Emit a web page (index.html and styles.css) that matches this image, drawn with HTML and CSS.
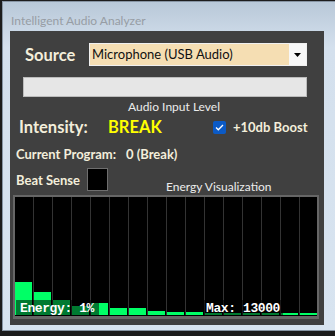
FILE: index.html
```html
<!DOCTYPE html>
<html>
  <head>
    <meta charset="UTF-8">
    <title>Intelligent Audio Analyzer</title>
    <link rel="stylesheet" href="styles.css">
  </head>
  <body>
    <div class="window">
      <div class="titlebar">Intelligent Audio Analyzer</div>

      <div class="panel">
        <!-- Source -->
        <div class="source-row">
          <span class="source-label">Source</span>
          <div class="combo">
            <span class="combo-text">Microphone (USB Audio)</span>
            <span class="combo-btn">
              <svg width="7" height="4" viewBox="0 0 7 4"><path d="M0 0h7L3.5 4z" fill="#000"/></svg>
            </span>
          </div>
        </div>

        <div class="level-bar"></div>
        <div class="level-caption">Audio Input Level</div>

        <!-- Intensity -->
        <div class="intensity-row">
          <span class="intensity-label">Intensity:</span>
          <span class="intensity-value">BREAK</span>
          <label class="boost">
            <span class="checkbox">
              <svg width="9" height="7" viewBox="0 0 9 7"><path d="M1 3.5l2.3 2.3L8 1" stroke="#fff" stroke-width="1.3" fill="none"/></svg>
            </span>
            +10db Boost
          </label>
        </div>

        <div class="program-row">
          <span class="program-label">Current Program:</span>
          <span>0 (Break)</span>
        </div>

        <div class="beat-row">
          <span class="beat-label">Beat Sense</span>
          <span class="beat-box"></span>
          <span class="vis-caption">Energy Visualization</span>
        </div>

        <!-- Energy chart -->
        <div class="chart">
          <div class="columns" id="columns"></div>
          <div class="chart-label energy-label">Energy: 1%</div>
          <div class="chart-label max-label">Max: 13000</div>
        </div>
      </div>
    </div>

    <script>
      const heights = [33, 23, 15, 9, 12, 7, 7, 4, 3, 3, 2, 2, 2, 2, 2, 2];
      const columns = document.getElementById('columns');

      heights.forEach(h => {
        const col = document.createElement('div');
        col.className = 'col';
        const bar = document.createElement('div');
        bar.className = 'bar';
        bar.style.height = h + 'px';
        col.appendChild(bar);
        columns.appendChild(col);
      });
    </script>
  </body>
</html>
```

FILE: styles.css
```css
html, body {
  margin: 0;
  padding: 0;
}

body {
  background: #1c1c1c;
  width: 335px;
  height: 336px;
  overflow: hidden;
  font-family: Lato, "Noto Sans", sans-serif;
}

.window {
  margin: 1px 0 0 2px;
  width: 326px;
  height: 328px;
  border: 1px solid #8795a4;
  background: linear-gradient(180deg, #b8c8d8 0px, #d4e0ed 45px, #d8e4f0 100%);
  padding: 0 0 0 7px;
}

.titlebar {
  height: 29px;
  line-height: 38px;
  font-size: 12px;
  color: #979da4;
  padding-left: 1px;
  box-sizing: border-box;
}

.panel {
  width: 314px;
  height: 294px;
  background: #404040;
  color: #f3eedb;
  position: relative;
}

/* source row */
.source-row {
  display: flex;
  align-items: center;
  padding: 12px 0 0 15px;
}

.source-label {
  font-weight: bold;
  font-size: 16.5px;
  width: 64px;
}

.combo {
  display: flex;
  width: 218px;
  height: 23px;
  box-sizing: border-box;
  border: 1px solid #f0f0f0;
  background: #f5deb3;
}

.combo-text {
  flex: 1;
  font-size: 13px;
  line-height: 20px;
  padding-left: 2px;
  color: #111;
}

.combo-btn {
  width: 17px;
  background: #f7f7f7;
  display: flex;
  align-items: center;
  justify-content: center;
}

.level-bar {
  margin: 11px 0 0 13px;
  width: 284px;
  height: 20px;
  box-sizing: border-box;
  background: #e6e6e6;
  border: 1px solid #bcbcbc;
}

.level-caption {
  text-align: center;
  font-size: 12px;
  line-height: 16px;
  margin-top: 2px;
  padding-left: 14px;
  color: #ececec;
}

/* intensity */
.intensity-row {
  display: flex;
  align-items: center;
  height: 22px;
  margin-top: 1px;
  padding-left: 9px;
  font-weight: bold;
}

.intensity-label {
  font-size: 16.5px;
  width: 89px;
}

.intensity-value {
  font-size: 16.5px;
  color: #ffff00;
  width: 105px;
}

.boost {
  display: flex;
  align-items: center;
  gap: 7px;
  font-size: 13px;
}

.checkbox {
  width: 13px;
  height: 13px;
  border-radius: 2px;
  background: #0b5ac6;
  display: flex;
  align-items: center;
  justify-content: center;
}

.program-row {
  display: flex;
  font-weight: bold;
  font-size: 13px;
  line-height: 18px;
  margin-top: 7px;
  padding-left: 6px;
}

.program-label {
  width: 110px;
}

.beat-row {
  display: flex;
  align-items: center;
  margin-top: 5px;
  padding-left: 6px;
  font-weight: bold;
  font-size: 13px;
  height: 23px;
}

.beat-label {
  width: 71px;
}

.beat-box {
  width: 21px;
  height: 23px;
  box-sizing: border-box;
  background: #000;
  border: 1px solid #6e6e6e;
}

.vis-caption {
  font-weight: normal;
  font-size: 12px;
  margin-left: 58px;
  align-self: flex-end;
  position: relative;
  top: 3px;
  color: #ececec;
}

/* chart */
.chart {
  position: relative;
  margin: 4px 0 0 3px;
  width: 306px;
  height: 124px;
  box-sizing: border-box;
  border: 2px solid #666;
  border-bottom-width: 3px;
  background: #000;
  overflow: hidden;
}

.columns {
  display: flex;
  height: 100%;
  padding-bottom: 1px;
  box-sizing: border-box;
}

.col {
  flex: 0 0 19px;
  box-sizing: border-box;
  border-right: 1px solid #333;
  display: flex;
  align-items: flex-end;
}

.bar {
  width: 17px;
  background: #00ff66;
}

.chart-label {
  position: absolute;
  bottom: 0;
  height: 16px;
  line-height: 17px;
  background: rgba(0, 0, 0, 0.52);
  font-family: "Liberation Mono", "Courier New", monospace;
  font-weight: bold;
  font-size: 13px;
  letter-spacing: -0.4px;
  color: #fff;
  box-sizing: border-box;
}

.energy-label {
  left: 1px;
  width: 83px;
  padding-left: 4px;
}

.max-label {
  left: 189px;
  width: 79px;
  padding-left: 2px;
}
```
